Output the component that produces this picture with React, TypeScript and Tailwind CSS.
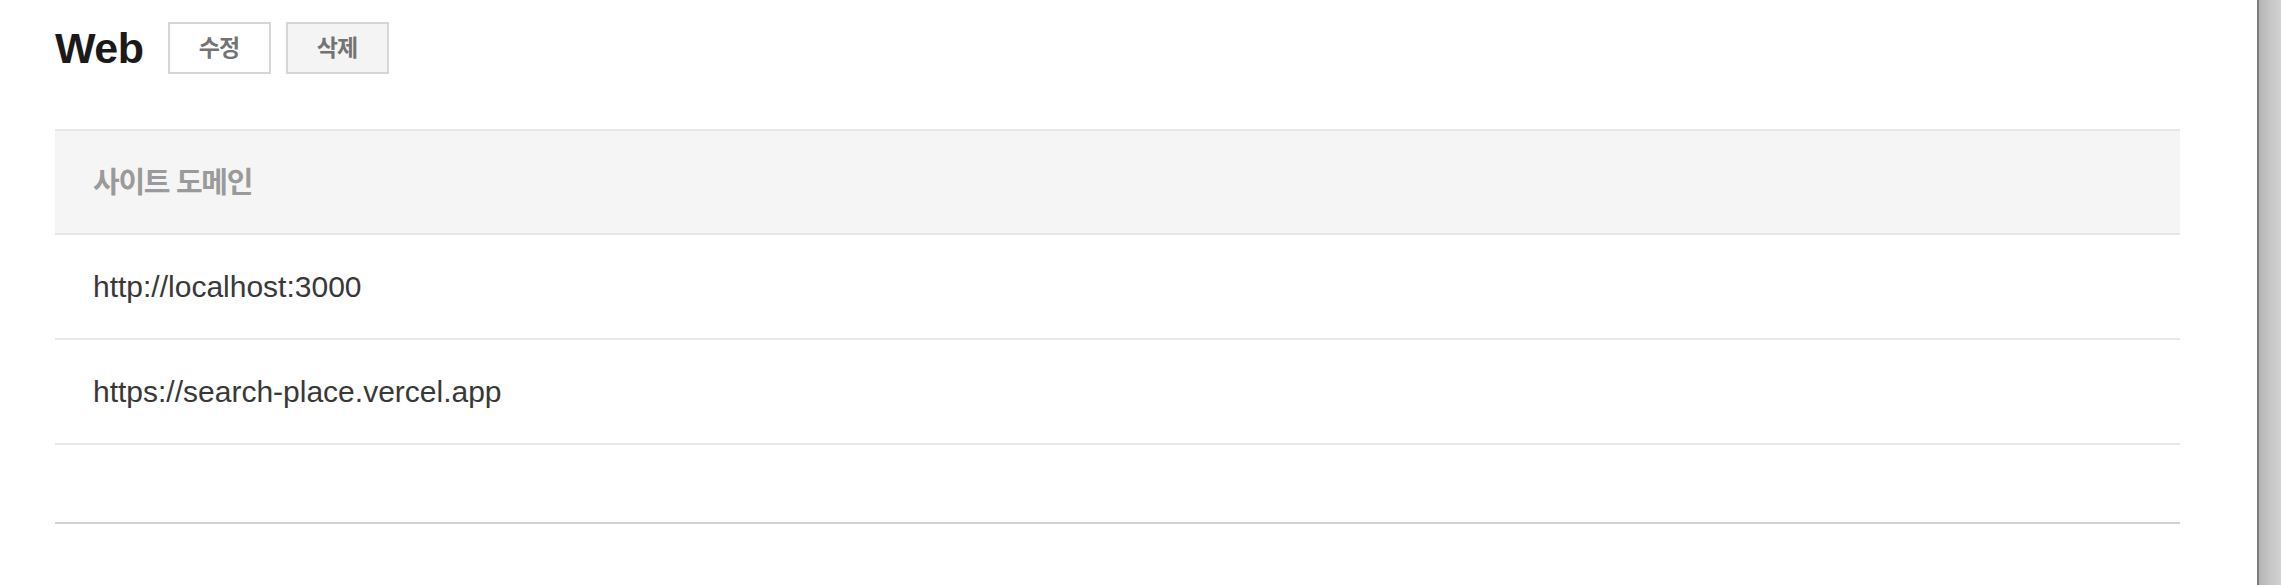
const font = "font-['Liberation_Sans','Noto_Sans_CJK_KR',sans-serif]";

const domains = ["http://localhost:3000", "https://search-place.vercel.app"];

export default function App() {
  return (
    <div className={`flex h-[585px] w-full bg-white ${font}`}>
      <main className="flex-1 pl-[55px] pr-[77px] pt-[22px]">
        <div className="flex items-center">
          <h1 className="text-[43px] font-bold leading-none tracking-[-0.5px] text-[#1a1a1a]">Web</h1>
          <button
            type="button"
            className="ml-[24px] flex h-[52px] w-[103px] items-center justify-center border-2 border-[#d6d6d6] bg-white text-[23px] font-semibold tracking-[-1px] text-[#737373]"
          >
            수정
          </button>
          <button
            type="button"
            className="ml-[15px] flex h-[52px] w-[103px] items-center justify-center border-2 border-[#d6d6d6] bg-[#f4f4f4] text-[23px] font-semibold tracking-[-1px] text-[#737373]"
          >
            삭제
          </button>
        </div>

        <div className="mt-[55px] border-t-2 border-[#e8e8e8]">
          <div className="flex h-[104px] items-center border-b-2 border-[#e6e6e6] bg-[#f5f5f5] pl-[38px] pt-[4px] text-[29px] font-bold tracking-[-1.3px] text-[#9a9a9a]">
            사이트 도메인
          </div>
          {domains.map((domain) => (
            <div
              key={domain}
              className="flex h-[105px] items-center border-b-2 border-[#e8e8e8] pl-[38px] text-[30px] text-[#383838]"
            >
              {domain}
            </div>
          ))}
          <div className="h-[79px] border-b-2 border-[#d2d2d2]" />
        </div>
      </main>
      <div className="w-[24px] border-l-2 border-[#7c7c7c] bg-gradient-to-r from-[#b4b4b4] via-[#c6c6c6] to-[#d2d2d2]" />
    </div>
  );
}
